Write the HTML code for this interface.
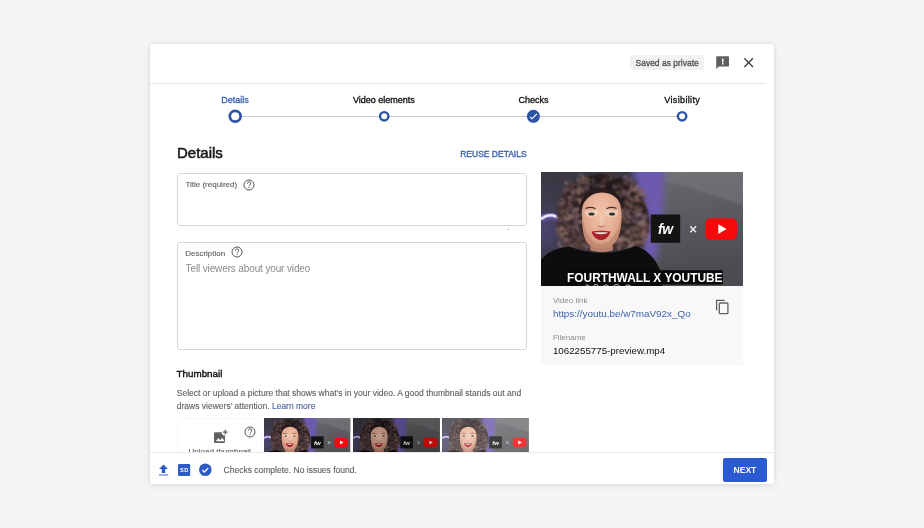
<!DOCTYPE html>
<html><head><meta charset="utf-8">
<style>
*{box-sizing:border-box;margin:0;padding:0}
html,body{width:924px;height:528px;overflow:hidden;background:#f5f5f5;font-family:"Liberation Sans",sans-serif;color:#0f0f0f}
.a{position:absolute;white-space:nowrap;line-height:1}
#dlg{position:absolute;left:150px;top:44px;width:624px;height:440px;background:#fff;border-radius:3px;box-shadow:0 0 4px rgba(0,0,0,.10),0 2px 10px rgba(0,0,0,.07);overflow:hidden}
.hl{position:absolute;height:1px;background:#e6e6e6}
.box{position:absolute;border:1px solid #d6d6d6;border-radius:3px}
.gray{color:#606060;-webkit-text-stroke:0.12px #606060}
.med{-webkit-text-stroke:0.32px currentColor}
.blue{color:#3d63b0}
</style></head><body>
<div id="root" style="position:absolute;left:0;top:0;width:924px;height:528px;will-change:transform">
<div id="dlg"></div>

<!-- header -->
<div class="a" style="left:630px;top:54.5px;width:74px;height:15px;background:#f2f2f2;border-radius:3px"></div>
<div class="a gray med" id="saved" style="left:635.5px;top:58.6px;font-size:8.5px;color:#555">Saved as private</div>
<svg class="a" style="left:714px;top:54px" width="17" height="17" viewBox="714 54 17 17">
  <path d="M717 56.2h11.2a0.8 0.8 0 0 1 .8.8v8.7a0.8 0.8 0 0 1-.8.8h-9.2l-2.8 2.6v-12.1a0.8 0.8 0 0 1 .8-.8z" fill="#5f5f5f"/>
  <rect x="722" y="58.5" width="1.5" height="4" fill="#fff"/>
  <rect x="722" y="63" width="1.5" height="1.5" fill="#fff"/>
</svg>
<svg class="a" style="left:743px;top:57.3px" width="11" height="11" viewBox="0 0 11 11">
  <path d="M1.3 1.2L10 9.9M10 1.2L1.3 9.9" stroke="#444" stroke-width="1.4"/>
</svg>
<div class="hl" style="left:150px;top:83px;width:616px"></div>

<!-- stepper -->
<div class="a blue med" style="left:221.3px;top:95.6px;font-size:9px">Details</div>
<div class="a med" style="left:352.9px;top:95.6px;font-size:9px">Video elements</div>
<div class="a med" style="left:518.6px;top:95.6px;font-size:9px">Checks</div>
<div class="a med" style="left:664.3px;top:95.6px;font-size:9px;letter-spacing:0.35px">Visibility</div>
<div class="a" style="left:235px;top:115.5px;width:447px;height:1.2px;background:#c9c9c9"></div>
<svg class="a" style="left:220px;top:101px" width="478" height="30" viewBox="220 101 478 30">
  <circle cx="235.2" cy="116.3" r="5.4" fill="#fff" stroke="#2c53a6" stroke-width="2.7"/>
  <circle cx="384.2" cy="116.3" r="4.2" fill="#fff" stroke="#2c53a6" stroke-width="2.4"/>
  <circle cx="533.4" cy="116.3" r="6.5" fill="#2c53a6"/>
  <path d="M530.2 117l1.8 1.8 4.8-4.8" fill="none" stroke="#fff" stroke-width="1.15"/>
  <circle cx="682.1" cy="116.3" r="4.2" fill="#fff" stroke="#2c53a6" stroke-width="2.4"/>
</svg>

<!-- heading -->
<div class="a" style="left:177px;top:144.7px;font-size:15px;color:#1a1a1a;-webkit-text-stroke:0.55px #1a1a1a">Details</div>
<div class="a blue" style="left:460.2px;top:149.6px;font-size:8.5px;-webkit-text-stroke:0.35px #3d63b0">REUSE DETAILS</div>

<!-- title box -->
<div class="box" style="left:176.5px;top:173px;width:350.5px;height:53px"></div>
<div class="a gray" style="left:185.4px;top:180.5px;font-size:8px">Title (required)</div>
<svg class="a" style="left:243px;top:178.5px" width="12" height="12" viewBox="0 0 12 12">
  <circle cx="6" cy="6" r="5" fill="none" stroke="#555" stroke-width="1"/>
  <path d="M4.3 4.6a1.7 1.7 0 1 1 2.4 1.5c-.5.3-.7.6-.7 1.2" fill="none" stroke="#555" stroke-width="1"/>
  <circle cx="6" cy="8.6" r=".6" fill="#555"/>
</svg>
<div class="a" style="left:508px;top:229px;width:1px;height:1px;background:#888"></div>

<!-- description box -->
<div class="box" style="left:176.5px;top:242px;width:350.5px;height:107.5px"></div>
<div class="a gray" style="left:185.2px;top:250.1px;font-size:8px">Description</div>
<svg class="a" style="left:231px;top:246.3px" width="12" height="12" viewBox="0 0 12 12">
  <circle cx="6" cy="6" r="5" fill="none" stroke="#555" stroke-width="1"/>
  <path d="M4.3 4.6a1.7 1.7 0 1 1 2.4 1.5c-.5.3-.7.6-.7 1.2" fill="none" stroke="#555" stroke-width="1"/>
  <circle cx="6" cy="8.6" r=".6" fill="#555"/>
</svg>
<div class="a" style="left:185.6px;top:263.9px;font-size:10px;color:#8a8a8a;letter-spacing:-0.13px">Tell viewers about your video</div>

<!-- thumbnail section -->
<div class="a" style="left:176.6px;top:368.6px;font-size:9.8px;color:#111;-webkit-text-stroke:0.4px #111">Thumbnail</div>
<div class="a gray" style="left:176.8px;top:388.8px;font-size:8.5px">Select or upload a picture that shows what’s in your video. A good thumbnail stands out and</div>
<div class="a gray" style="left:176.8px;top:401.8px;font-size:8.5px">draws viewers’ attention. <span class="blue">Learn more</span></div>

<!-- preview -->
<div class="a" style="left:541px;top:286px;width:202px;height:79px;background:#f8f8f8"></div>
<div class="a" style="left:552.9px;top:296.7px;font-size:8px;color:#8c8c8c">Video link</div>
<div class="a blue" style="left:552.9px;top:308.8px;font-size:9.9px">https://youtu.be/w7maV92x_Qo</div>
<div class="a" style="left:552.9px;top:334.2px;font-size:8px;color:#8c8c8c">Filename</div>
<div class="a" style="left:552.9px;top:346px;font-size:9.75px;color:#111">1062255775-preview.mp4</div>
<svg class="a" style="left:714px;top:298px" width="16" height="17" viewBox="0 0 16 17">
  <path d="M2.6 12.3V2.3h8.2" fill="none" stroke="#606060" stroke-width="1.3"/>
  <rect x="5.3" y="5" width="8.6" height="10.6" rx="0.9" fill="none" stroke="#606060" stroke-width="1.3"/>
</svg>

<!-- video -->
<svg width="0" height="0" style="position:absolute"><symbol id="scene" viewBox="0 0 202 114"><defs>
 <linearGradient id="bgR" x1="0" y1="0" x2="0.25" y2="1">
  <stop offset="0" stop-color="#6e6e72"/><stop offset="0.45" stop-color="#5e5e62"/><stop offset="1" stop-color="#4c4c50"/>
 </linearGradient>
 <radialGradient id="glowL" cx="0.05" cy="0.5" r="0.6">
  <stop offset="0" stop-color="#4c4470"/><stop offset="0.45" stop-color="#3c3a48"/><stop offset="1" stop-color="#393942"/>
 </radialGradient>
 <radialGradient id="skin" cx="0.5" cy="0.38" r="0.68">
  <stop offset="0" stop-color="#f0c4aa"/><stop offset="0.55" stop-color="#e6ae94"/><stop offset="1" stop-color="#c89078"/>
 </radialGradient>
 <radialGradient id="hairBase" cx="0.55" cy="0.2" r="0.8">
  <stop offset="0" stop-color="#1e1716"/><stop offset="0.5" stop-color="#2e2222"/><stop offset="1" stop-color="#3e2e2e"/>
 </radialGradient>
 <filter id="blur3" x="-50%" y="-50%" width="200%" height="200%"><feGaussianBlur stdDeviation="3.5"/></filter>
 <filter id="blur1" x="-20%" y="-20%" width="140%" height="140%"><feGaussianBlur stdDeviation="0.8"/></filter>
 <filter id="soft" x="-10%" y="-10%" width="120%" height="120%"><feGaussianBlur stdDeviation="0.85"/></filter>
 <filter id="soft2" x="-10%" y="-10%" width="120%" height="120%"><feGaussianBlur stdDeviation="0.6"/></filter>
 <clipPath id="vclip"><rect width="202" height="114"/></clipPath>
</defs>
<g clip-path="url(#vclip)">
 <rect width="202" height="114" fill="url(#bgR)"/>
 <path d="M110 -2H204V34C184 28 150 14 110 6Z" fill="#7a7a7e" opacity="0.5" filter="url(#blur1)"/>
 <path d="M-2 -2H100V116H-2Z" fill="url(#glowL)" filter="url(#blur1)"/>
 <path d="M90 -10L124 -10L122 40L116 88L102 90L98 30Z" fill="#6c5aae" filter="url(#blur3)"/>
 <path d="M0 47C6 42 13 41.5 21 48.5" fill="none" stroke="#7a64d0" stroke-width="8" opacity="0.55" filter="url(#blur1)"/>
 <path d="M0 47C6 42 13 41.5 21 48.5" fill="none" stroke="#c8b8f8" stroke-width="3.6" opacity="0.7"/>
 <path d="M0 47C6 42 13 41.5 21 48.5" fill="none" stroke="#f0ecff" stroke-width="2"/>
 <g filter="url(#soft)">
 <path d="M60 2.5C74 2 86 6 94 15C101 23 106 34 108.5 45C110 57 107 67 102 74C97 79 90 80 84 78L40 78C33 80 27 78 23 72C18 64 15.5 54 16 44C17 32 21 21 28 13C36 5 48 3 60 2.5Z" fill="url(#hairBase)"/>
 <g fill="none" style="opacity:var(--curl,1)">
 <path d="M30.7 55.0A2.3 2.3 0 1 1 26.4 54.3" stroke="#4e3a3a" stroke-width="1.5"/>
<path d="M57.5 11.5A2.7 2.7 0 1 1 53.5 9.3" stroke="#6a5868" stroke-width="1.0"/>
<path d="M99.0 48.0A1.4 1.4 0 1 1 98.9 50.5" stroke="#82625c" stroke-width="1.3"/>
<path d="M83.7 6.3A2.5 2.5 0 1 1 88.3 8.2" stroke="#5e4442" stroke-width="1.3"/>
<path d="M99.4 16.5A2.5 2.5 0 1 1 96.3 19.7" stroke="#70524e" stroke-width="1.4"/>
<path d="M25.9 44.4A1.7 1.7 0 1 1 28.0 41.8" stroke="#4e3a3a" stroke-width="1.3"/>
<path d="M37.0 66.8A1.5 1.5 0 1 1 39.9 67.4" stroke="#6a5868" stroke-width="1.6"/>
<path d="M33.2 46.8A2.1 2.1 0 1 1 33.6 50.8" stroke="#8a6e74" stroke-width="1.1"/>
<path d="M96.6 28.7A2.4 2.4 0 1 1 97.4 25.2" stroke="#82625c" stroke-width="1.1"/>
<path d="M30.6 33.4A1.5 1.5 0 1 1 28.5 33.1" stroke="#5e4442" stroke-width="1.4"/>
<path d="M100.4 41.1A1.9 1.9 0 1 1 101.4 37.8" stroke="#70524e" stroke-width="1.6"/>
<path d="M41.9 70.3A2.3 2.3 0 0 1 38.9 67.0" stroke="#5e4442" stroke-width="1.3"/>
<path d="M48.5 72.8A2.8 2.8 0 0 1 43.0 72.0" stroke="#6a5868" stroke-width="1.4"/>
<path d="M75.7 74.4A2.0 2.0 0 0 1 77.9 71.1" stroke="#70524e" stroke-width="1.5"/>
<path d="M27.8 57.9A1.9 1.9 0 1 1 24.7 56.2" stroke="#70524e" stroke-width="1.6"/>
<path d="M76.4 66.0A2.2 2.2 0 1 1 74.3 68.9" stroke="#82625c" stroke-width="1.4"/>
<path d="M24.1 12.0A1.9 1.9 0 0 1 27.4 10.2" stroke="#70524e" stroke-width="1.0"/>
<path d="M97.6 53.3A1.5 1.5 0 1 1 99.8 53.4" stroke="#8a6e74" stroke-width="1.6"/>
<path d="M75.7 15.0A1.6 1.6 0 1 1 73.7 13.0" stroke="#6a5868" stroke-width="1.3"/>
<path d="M101.0 60.1A2.5 2.5 0 1 1 97.3 63.3" stroke="#5e4442" stroke-width="1.2"/>
<path d="M33.6 78.5A2.2 2.2 0 1 1 37.1 75.8" stroke="#6a5868" stroke-width="1.0"/>
<path d="M100.2 22.7A2.1 2.1 0 1 1 103.1 25.4" stroke="#8a6e74" stroke-width="1.3"/>
<path d="M17.4 45.9A1.8 1.8 0 1 1 17.6 49.3" stroke="#8a6e74" stroke-width="1.2"/>
<path d="M66.6 2.8A2.8 2.8 0 1 1 68.8 7.8" stroke="#82625c" stroke-width="1.0"/>
<path d="M96.7 52.9A2.2 2.2 0 1 1 100.8 53.1" stroke="#94766a" stroke-width="1.5"/>
<path d="M80.5 66.8A2.4 2.4 0 1 1 84.5 64.2" stroke="#4e3a3a" stroke-width="1.5"/>
<path d="M32.5 73.3A2.3 2.3 0 1 1 36.1 75.0" stroke="#5e4442" stroke-width="1.3"/>
<path d="M100.8 60.1A2.2 2.2 0 1 1 99.7 64.2" stroke="#94766a" stroke-width="1.4"/>
<path d="M92.5 19.6A2.0 2.0 0 1 1 93.2 22.8" stroke="#4e3a3a" stroke-width="1.2"/>
<path d="M41.7 31.1A1.5 1.5 0 1 1 44.1 32.5" stroke="#8a6e74" stroke-width="1.1"/>
<path d="M27.7 32.6A2.3 2.3 0 0 1 29.7 36.7" stroke="#82625c" stroke-width="1.4"/>
<path d="M37.5 69.2A1.5 1.5 0 1 1 38.6 66.6" stroke="#6a5868" stroke-width="1.3"/>
<path d="M82.2 11.3A1.9 1.9 0 1 1 85.0 13.8" stroke="#4e3a3a" stroke-width="1.3"/>
<path d="M29.8 32.4A1.7 1.7 0 1 1 29.3 29.1" stroke="#70524e" stroke-width="1.6"/>
<path d="M76.7 70.2A1.9 1.9 0 1 1 74.0 68.2" stroke="#5e4442" stroke-width="1.3"/>
<path d="M83.3 19.0A1.3 1.3 0 0 1 80.8 19.7" stroke="#8a6e74" stroke-width="1.1"/>
<path d="M31.2 46.5A2.7 2.7 0 0 1 26.0 45.4" stroke="#4e3a3a" stroke-width="1.3"/>
<path d="M37.1 64.5A2.6 2.6 0 1 1 32.7 62.3" stroke="#4e3a3a" stroke-width="1.5"/>
<path d="M21.4 74.0A2.4 2.4 0 1 1 19.8 69.6" stroke="#94766a" stroke-width="1.4"/>
<path d="M93.0 28.9A1.8 1.8 0 1 1 96.0 30.2" stroke="#70524e" stroke-width="1.0"/>
<path d="M106.9 42.5A1.9 1.9 0 1 1 103.2 43.0" stroke="#6a5868" stroke-width="1.1"/>
<path d="M42.4 17.1A2.1 2.1 0 1 1 45.6 19.3" stroke="#6a5868" stroke-width="1.2"/>
<path d="M27.5 57.5A2.0 2.0 0 0 1 30.6 55.1" stroke="#70524e" stroke-width="1.5"/>
<path d="M37.7 4.0A2.3 2.3 0 1 1 39.8 6.8" stroke="#6a5868" stroke-width="1.5"/>
<path d="M78.8 12.9A2.1 2.1 0 1 1 75.0 11.7" stroke="#4e3a3a" stroke-width="1.1"/>
<path d="M89.7 61.8A2.6 2.6 0 1 1 91.2 57.1" stroke="#82625c" stroke-width="1.5"/>
<path d="M98.7 43.0A2.8 2.8 0 1 1 95.9 45.6" stroke="#4e3a3a" stroke-width="1.6"/>
<path d="M87.3 58.3A1.6 1.6 0 1 1 84.4 59.5" stroke="#8a6e74" stroke-width="1.3"/>
<path d="M22.3 19.3A1.9 1.9 0 0 1 26.2 18.7" stroke="#6a5868" stroke-width="1.3"/>
<path d="M33.0 17.3A2.5 2.5 0 1 1 34.8 12.8" stroke="#70524e" stroke-width="1.3"/>
<path d="M94.8 49.4A2.5 2.5 0 0 1 93.1 44.7" stroke="#6a5868" stroke-width="1.1"/>
<path d="M90.3 71.0A1.7 1.7 0 0 1 89.0 67.8" stroke="#94766a" stroke-width="1.6"/>
<path d="M87.2 64.0A2.0 2.0 0 0 1 84.1 66.5" stroke="#5e4442" stroke-width="1.0"/>
<path d="M83.9 7.3A1.7 1.7 0 1 1 85.4 5.0" stroke="#5e4442" stroke-width="1.2"/>
<path d="M92.2 72.9A1.6 1.6 0 1 1 89.7 74.1" stroke="#94766a" stroke-width="1.2"/>
<path d="M35.1 8.8A2.4 2.4 0 1 1 36.9 12.8" stroke="#82625c" stroke-width="1.1"/>
<path d="M62.4 12.5A2.0 2.0 0 1 1 65.4 10.3" stroke="#5e4442" stroke-width="1.4"/>
<path d="M16.2 54.6A1.9 1.9 0 1 1 18.5 57.5" stroke="#5e4442" stroke-width="1.5"/>
<path d="M81.1 37.4A2.1 2.1 0 1 1 82.2 41.1" stroke="#8a6e74" stroke-width="1.2"/>
<path d="M85.7 51.6A2.0 2.0 0 0 1 89.2 49.9" stroke="#8a6e74" stroke-width="1.4"/>
<path d="M95.0 70.5A2.6 2.6 0 0 1 99.8 72.0" stroke="#94766a" stroke-width="1.4"/>
<path d="M62.8 12.8A1.8 1.8 0 1 1 59.3 12.9" stroke="#82625c" stroke-width="1.2"/>
<path d="M29.4 13.7A2.1 2.1 0 1 1 26.7 10.4" stroke="#70524e" stroke-width="1.3"/>
<path d="M88.5 13.9A2.3 2.3 0 0 1 88.0 18.6" stroke="#8a6e74" stroke-width="1.0"/>
<path d="M103.8 58.2A2.5 2.5 0 1 1 107.2 56.7" stroke="#4e3a3a" stroke-width="1.2"/>
<path d="M99.8 60.0A2.2 2.2 0 1 1 100.2 63.6" stroke="#70524e" stroke-width="1.0"/>
<path d="M36.8 39.2A1.7 1.7 0 1 1 39.4 37.5" stroke="#94766a" stroke-width="1.1"/>
<path d="M40.4 5.5A1.8 1.8 0 1 1 40.9 9.0" stroke="#94766a" stroke-width="1.1"/>
<path d="M78.5 73.2A1.4 1.4 0 1 1 80.9 73.2" stroke="#6a5868" stroke-width="1.5"/>
<path d="M32.1 37.8A1.8 1.8 0 0 1 32.6 41.1" stroke="#82625c" stroke-width="1.3"/>
<path d="M27.8 76.0A1.3 1.3 0 1 1 28.8 78.4" stroke="#94766a" stroke-width="1.1"/>
<path d="M87.1 41.2A1.9 1.9 0 0 1 84.4 43.7" stroke="#82625c" stroke-width="1.4"/>
<path d="M101.5 50.6A1.7 1.7 0 1 1 100.7 52.9" stroke="#94766a" stroke-width="1.5"/>
<path d="M101.1 17.2A2.8 2.8 0 1 1 97.1 19.6" stroke="#82625c" stroke-width="1.3"/>
<path d="M89.3 17.1A1.5 1.5 0 1 1 87.4 17.7" stroke="#5e4442" stroke-width="1.5"/>
<path d="M78.1 22.1A1.5 1.5 0 1 1 77.3 24.6" stroke="#4e3a3a" stroke-width="1.0"/>
<path d="M27.7 47.8A2.3 2.3 0 1 1 31.8 46.0" stroke="#94766a" stroke-width="1.4"/>
<path d="M85.3 7.5A1.8 1.8 0 1 1 83.0 9.1" stroke="#6a5868" stroke-width="1.2"/>
<path d="M101.8 20.5A1.8 1.8 0 1 1 98.4 21.6" stroke="#8a6e74" stroke-width="1.2"/>
<path d="M40.2 61.4A1.3 1.3 0 1 1 38.7 63.2" stroke="#82625c" stroke-width="1.0"/>
<path d="M35.3 8.5A1.8 1.8 0 0 1 35.8 11.9" stroke="#6a5868" stroke-width="1.1"/>
<path d="M103.6 25.8A1.7 1.7 0 1 1 106.4 25.4" stroke="#70524e" stroke-width="1.4"/>
<path d="M41.2 75.5A1.4 1.4 0 1 1 42.5 73.2" stroke="#82625c" stroke-width="1.2"/>
<path d="M22.8 76.1A2.7 2.7 0 0 1 18.2 78.8" stroke="#4e3a3a" stroke-width="1.4"/>
<path d="M85.1 35.8A1.4 1.4 0 1 1 83.9 33.7" stroke="#4e3a3a" stroke-width="1.5"/>
<path d="M28.8 42.4A1.5 1.5 0 1 1 27.2 43.7" stroke="#94766a" stroke-width="1.0"/>
<path d="M97.7 65.0A2.0 2.0 0 1 1 100.4 62.7" stroke="#82625c" stroke-width="1.1"/>
<path d="M36.1 28.1A2.1 2.1 0 1 1 38.3 30.3" stroke="#5e4442" stroke-width="1.2"/>
<path d="M77.2 69.4A2.0 2.0 0 1 1 74.2 71.4" stroke="#4e3a3a" stroke-width="1.2"/>
<path d="M78.6 26.3A2.2 2.2 0 0 1 82.4 23.9" stroke="#6a5868" stroke-width="1.3"/>
<path d="M100.2 69.3A1.6 1.6 0 1 1 101.7 71.2" stroke="#70524e" stroke-width="1.6"/>
<path d="M20.1 56.9A1.7 1.7 0 0 1 22.9 58.8" stroke="#94766a" stroke-width="1.3"/>
<path d="M93.7 75.3A2.6 2.6 0 1 1 93.7 70.4" stroke="#8a6e74" stroke-width="1.6"/>
<path d="M81.8 43.0A2.1 2.1 0 1 1 82.2 38.8" stroke="#94766a" stroke-width="1.5"/>
<path d="M41.1 31.7A1.6 1.6 0 1 1 42.6 29.4" stroke="#6a5868" stroke-width="1.4"/>
<path d="M80.1 32.4A1.7 1.7 0 1 1 77.0 30.9" stroke="#6a5868" stroke-width="1.5"/>
<path d="M28.4 25.6A2.5 2.5 0 1 1 32.6 28.2" stroke="#70524e" stroke-width="1.1"/>
<path d="M94.1 47.0A1.6 1.6 0 1 1 96.2 45.3" stroke="#4e3a3a" stroke-width="1.2"/>
<path d="M107.8 29.9A2.2 2.2 0 1 1 103.4 30.6" stroke="#70524e" stroke-width="1.2"/>
<path d="M30.5 7.3A1.8 1.8 0 1 1 29.2 10.7" stroke="#5e4442" stroke-width="1.6"/>
<path d="M41.9 64.5A2.7 2.7 0 1 1 36.9 63.9" stroke="#5e4442" stroke-width="1.5"/>
<path d="M35.1 29.2A2.0 2.0 0 1 1 39.1 28.7" stroke="#82625c" stroke-width="1.5"/>
<path d="M41.6 49.9A1.4 1.4 0 1 1 40.2 48.1" stroke="#70524e" stroke-width="1.4"/>
<path d="M80.9 20.5A2.0 2.0 0 0 1 84.7 21.7" stroke="#82625c" stroke-width="1.3"/>
<path d="M101.6 67.8A2.5 2.5 0 1 1 98.6 70.8" stroke="#82625c" stroke-width="1.2"/>
<path d="M42.8 36.9A2.7 2.7 0 0 1 37.6 35.5" stroke="#5e4442" stroke-width="1.6"/>
<path d="M43.8 69.4A1.9 1.9 0 1 1 45.8 66.8" stroke="#4e3a3a" stroke-width="1.1"/>
<path d="M23.7 45.3A2.7 2.7 0 1 1 28.6 43.8" stroke="#70524e" stroke-width="1.2"/>
<path d="M20.5 42.9A2.7 2.7 0 1 1 24.2 43.5" stroke="#5e4442" stroke-width="1.5"/>
<path d="M38.8 17.8A1.6 1.6 0 1 1 40.7 15.4" stroke="#6a5868" stroke-width="1.1"/>
<path d="M82.9 16.6A1.5 1.5 0 1 1 81.2 14.4" stroke="#4e3a3a" stroke-width="1.2"/>
<path d="M104.9 52.6A2.6 2.6 0 1 1 102.7 57.1" stroke="#70524e" stroke-width="1.6"/>
<path d="M85.0 21.9A1.3 1.3 0 1 1 86.5 23.1" stroke="#70524e" stroke-width="1.0"/>
<path d="M49.0 74.7A2.0 2.0 0 0 1 52.5 76.6" stroke="#94766a" stroke-width="1.5"/>
<path d="M76.6 3.6A1.8 1.8 0 1 1 74.2 2.4" stroke="#6a5868" stroke-width="1.0"/>
<path d="M19.0 36.5A2.3 2.3 0 1 1 22.3 33.5" stroke="#5e4442" stroke-width="1.5"/>
<path d="M89.3 21.8A2.0 2.0 0 1 1 92.2 19.2" stroke="#6a5868" stroke-width="1.4"/>
<path d="M92.9 58.5A2.3 2.3 0 1 1 91.9 54.4" stroke="#4e3a3a" stroke-width="1.6"/>
<path d="M32.9 75.4A2.3 2.3 0 1 1 36.5 72.9" stroke="#70524e" stroke-width="1.1"/>
<path d="M75.0 24.1A2.3 2.3 0 0 1 78.2 20.8" stroke="#82625c" stroke-width="1.2"/>
<path d="M96.5 15.2A2.6 2.6 0 1 1 93.4 12.2" stroke="#82625c" stroke-width="1.5"/>
<path d="M35.3 19.0A2.1 2.1 0 1 1 37.7 22.5" stroke="#94766a" stroke-width="1.2"/>
<path d="M93.3 14.4A2.3 2.3 0 1 1 93.9 11.3" stroke="#4e3a3a" stroke-width="1.5"/>
<path d="M32.0 42.8A2.8 2.8 0 1 1 35.2 45.2" stroke="#8a6e74" stroke-width="1.0"/>
<path d="M38.0 76.5A1.7 1.7 0 1 1 40.3 75.0" stroke="#5e4442" stroke-width="1.2"/>
<path d="M31.5 28.1A2.0 2.0 0 1 1 31.6 24.6" stroke="#6a5868" stroke-width="1.2"/>
<path d="M94.3 59.5A2.0 2.0 0 1 1 92.7 55.8" stroke="#8a6e74" stroke-width="1.0"/>
<path d="M29.2 35.6A2.1 2.1 0 1 1 25.1 34.8" stroke="#82625c" stroke-width="1.3"/>
<path d="M91.4 41.1A2.5 2.5 0 1 1 96.2 42.5" stroke="#82625c" stroke-width="1.2"/>
<path d="M75.8 12.0A1.9 1.9 0 0 1 76.0 15.7" stroke="#4e3a3a" stroke-width="1.1"/>
<path d="M82.5 6.5A1.6 1.6 0 1 1 84.6 7.3" stroke="#6a5868" stroke-width="1.4"/>
<path d="M81.5 13.5A1.6 1.6 0 1 1 80.6 11.2" stroke="#4e3a3a" stroke-width="1.0"/>
<path d="M23.8 52.7A2.7 2.7 0 0 1 27.9 55.7" stroke="#70524e" stroke-width="1.1"/>
<path d="M16.9 61.0A2.4 2.4 0 1 1 20.0 57.8" stroke="#70524e" stroke-width="1.5"/>
<path d="M92.2 8.3A1.6 1.6 0 1 1 90.1 6.2" stroke="#82625c" stroke-width="1.4"/>
<path d="M89.0 45.0A1.9 1.9 0 0 1 87.4 41.7" stroke="#6a5868" stroke-width="1.0"/>
<path d="M80.0 69.1A1.7 1.7 0 1 1 82.7 67.8" stroke="#6a5868" stroke-width="1.5"/>
<path d="M63.6 8.0A1.8 1.8 0 0 1 66.3 5.8" stroke="#4e3a3a" stroke-width="1.2"/>
<path d="M100.1 56.0A1.5 1.5 0 0 1 102.6 54.5" stroke="#82625c" stroke-width="1.2"/>
<path d="M45.7 16.5A1.5 1.5 0 0 1 48.2 15.0" stroke="#6a5868" stroke-width="1.4"/>
<path d="M40.9 31.5A1.7 1.7 0 0 1 40.0 28.2" stroke="#94766a" stroke-width="1.5"/>
<path d="M30.3 20.2A2.6 2.6 0 1 1 28.9 25.0" stroke="#70524e" stroke-width="1.3"/>
<path d="M38.2 44.6A1.6 1.6 0 0 1 40.9 43.0" stroke="#8a6e74" stroke-width="1.2"/>
<path d="M72.5 69.7A2.6 2.6 0 1 1 77.4 68.4" stroke="#5e4442" stroke-width="1.6"/>
<path d="M43.4 10.4A1.6 1.6 0 0 1 40.7 8.7" stroke="#6a5868" stroke-width="1.4"/>
<path d="M89.4 43.3A1.8 1.8 0 0 1 86.5 45.4" stroke="#8a6e74" stroke-width="1.4"/>
<path d="M33.2 60.8A2.2 2.2 0 1 1 32.2 64.7" stroke="#4e3a3a" stroke-width="1.0"/>
<path d="M100.4 36.3A2.7 2.7 0 1 1 97.4 33.8" stroke="#70524e" stroke-width="1.3"/>
<path d="M94.6 14.3A2.5 2.5 0 1 1 90.6 14.2" stroke="#82625c" stroke-width="1.1"/>
<path d="M24.6 78.3A1.9 1.9 0 1 1 27.8 76.8" stroke="#6a5868" stroke-width="1.1"/>
<path d="M103.5 58.8A1.5 1.5 0 1 1 101.7 61.0" stroke="#70524e" stroke-width="1.2"/>
<path d="M32.1 40.2A2.7 2.7 0 0 1 37.4 38.9" stroke="#8a6e74" stroke-width="1.4"/>
<path d="M89.1 14.2A2.4 2.4 0 1 1 90.7 17.0" stroke="#82625c" stroke-width="1.2"/>
<path d="M24.4 21.3A2.6 2.6 0 1 1 29.1 19.3" stroke="#82625c" stroke-width="1.2"/>
<path d="M78.9 70.4A1.9 1.9 0 0 1 82.7 70.3" stroke="#82625c" stroke-width="1.1"/>
<path d="M41.0 16.4A1.4 1.4 0 0 1 40.6 19.1" stroke="#5e4442" stroke-width="1.0"/>
<path d="M75.3 77.3A2.7 2.7 0 1 1 80.1 75.1" stroke="#4e3a3a" stroke-width="1.5"/>
<path d="M100.6 47.7A2.2 2.2 0 1 1 97.3 50.0" stroke="#8a6e74" stroke-width="1.6"/>
<path d="M99.3 27.7A2.3 2.3 0 1 1 97.4 23.7" stroke="#94766a" stroke-width="1.5"/>
<path d="M32.5 43.6A2.8 2.8 0 1 1 35.6 46.2" stroke="#5e4442" stroke-width="1.1"/>
<path d="M21.0 46.7A1.4 1.4 0 1 1 19.7 48.6" stroke="#4e3a3a" stroke-width="1.0"/>
<path d="M24.4 47.0A1.5 1.5 0 1 1 22.6 49.4" stroke="#5e4442" stroke-width="1.4"/>
<path d="M87.0 36.1A1.7 1.7 0 1 1 86.0 39.2" stroke="#5e4442" stroke-width="1.0"/>
<path d="M100.8 47.0A2.0 2.0 0 1 1 101.7 50.5" stroke="#70524e" stroke-width="1.4"/>
<path d="M91.3 67.4A2.5 2.5 0 1 1 95.2 65.9" stroke="#82625c" stroke-width="1.4"/>
<path d="M101.9 58.9A1.6 1.6 0 1 1 100.4 61.7" stroke="#82625c" stroke-width="1.3"/>
<path d="M23.6 43.6A1.4 1.4 0 1 1 25.4 41.4" stroke="#4e3a3a" stroke-width="1.5"/>
<path d="M22.9 67.9A1.4 1.4 0 1 1 23.0 65.3" stroke="#70524e" stroke-width="1.0"/>
<path d="M48.6 11.4A2.3 2.3 0 1 1 48.6 7.3" stroke="#94766a" stroke-width="1.2"/>
<path d="M15.7 33.1A2.7 2.7 0 0 1 20.4 30.9" stroke="#5e4442" stroke-width="1.4"/>
<path d="M77.3 71.9A1.5 1.5 0 1 1 76.7 74.8" stroke="#5e4442" stroke-width="1.2"/>
<path d="M32.5 57.7A2.8 2.8 0 1 1 37.1 57.3" stroke="#70524e" stroke-width="1.1"/>
<path d="M16.6 39.8A1.3 1.3 0 1 1 17.7 41.5" stroke="#4e3a3a" stroke-width="1.2"/>
<path d="M27.5 33.2A2.4 2.4 0 1 1 25.1 35.9" stroke="#4e3a3a" stroke-width="1.5"/>
<path d="M101.5 49.6A1.5 1.5 0 1 1 103.2 52.0" stroke="#8a6e74" stroke-width="1.6"/>
<path d="M94.1 16.4A1.4 1.4 0 1 1 93.2 18.8" stroke="#8a6e74" stroke-width="1.2"/>
<path d="M100.4 55.4A2.5 2.5 0 0 1 96.5 58.1" stroke="#4e3a3a" stroke-width="1.6"/>
<path d="M28.1 75.7A2.7 2.7 0 1 1 22.7 76.9" stroke="#70524e" stroke-width="1.6"/>
<path d="M25.5 47.0A1.8 1.8 0 1 1 22.0 47.9" stroke="#6a5868" stroke-width="1.1"/>
<path d="M31.8 58.6A2.4 2.4 0 1 1 35.8 58.8" stroke="#70524e" stroke-width="1.1"/>
<path d="M90.1 34.5A1.9 1.9 0 0 1 93.2 36.6" stroke="#70524e" stroke-width="1.3"/>
<path d="M102.5 65.8A2.8 2.8 0 0 1 107.3 63.3" stroke="#8a6e74" stroke-width="1.3"/>
<path d="M30.2 24.1A1.4 1.4 0 0 1 32.0 26.3" stroke="#4e3a3a" stroke-width="1.5"/>
<path d="M91.9 71.9A1.6 1.6 0 1 1 89.7 69.7" stroke="#6a5868" stroke-width="1.4"/>
<path d="M33.2 61.4A1.5 1.5 0 0 1 31.6 64.1" stroke="#6a5868" stroke-width="1.1"/>
<path d="M40.8 47.8A1.7 1.7 0 1 1 37.7 48.9" stroke="#94766a" stroke-width="1.4"/>
<path d="M22.1 65.6A2.2 2.2 0 1 1 24.7 62.2" stroke="#94766a" stroke-width="1.3"/>
<path d="M75.2 71.0A2.1 2.1 0 1 1 77.0 67.9" stroke="#70524e" stroke-width="1.3"/>
<path d="M104.7 40.8A1.8 1.8 0 1 1 101.7 42.4" stroke="#4e3a3a" stroke-width="1.4"/>
<path d="M92.6 73.7A2.4 2.4 0 0 1 96.9 71.8" stroke="#82625c" stroke-width="1.5"/>
<path d="M105.0 62.0A2.7 2.7 0 1 1 102.7 66.5" stroke="#94766a" stroke-width="1.5"/>
<path d="M39.5 58.9A2.3 2.3 0 0 1 36.7 55.4" stroke="#8a6e74" stroke-width="1.1"/>
<path d="M85.5 65.9A2.5 2.5 0 0 1 81.1 64.1" stroke="#8a6e74" stroke-width="1.2"/>
<path d="M36.8 13.7A1.8 1.8 0 1 1 35.5 17.1" stroke="#82625c" stroke-width="1.2"/>
<path d="M78.3 46.6A2.7 2.7 0 1 1 82.2 49.5" stroke="#82625c" stroke-width="1.5"/>
<path d="M97.2 40.5A2.4 2.4 0 1 1 100.6 38.5" stroke="#70524e" stroke-width="1.1"/>
<path d="M42.5 5.1A2.8 2.8 0 1 1 40.4 8.3" stroke="#82625c" stroke-width="1.2"/>
<path d="M26.9 45.3A1.7 1.7 0 1 1 26.5 42.0" stroke="#4e3a3a" stroke-width="1.1"/>
<path d="M26.0 25.7A1.3 1.3 0 0 1 26.4 23.1" stroke="#4e3a3a" stroke-width="1.4"/>
<path d="M89.8 75.4A2.7 2.7 0 1 1 84.6 76.3" stroke="#8a6e74" stroke-width="1.2"/>
<path d="M20.5 41.4A1.6 1.6 0 0 1 22.8 39.3" stroke="#82625c" stroke-width="1.4"/>
<path d="M27.4 49.0A2.0 2.0 0 1 1 31.2 47.8" stroke="#8a6e74" stroke-width="1.1"/>
<path d="M30.0 30.9A1.5 1.5 0 0 1 29.7 28.0" stroke="#5e4442" stroke-width="1.3"/>
<path d="M85.4 35.2A1.3 1.3 0 1 1 83.2 34.3" stroke="#4e3a3a" stroke-width="1.4"/>
<path d="M44.6 13.9A2.6 2.6 0 1 1 45.8 9.2" stroke="#4e3a3a" stroke-width="1.4"/>
<path d="M37.5 19.6A1.8 1.8 0 1 1 40.4 19.4" stroke="#70524e" stroke-width="1.3"/>
<path d="M83.3 69.1A1.9 1.9 0 1 1 86.9 70.0" stroke="#94766a" stroke-width="1.1"/>
<path d="M19.9 27.4A2.4 2.4 0 1 1 18.5 30.7" stroke="#8a6e74" stroke-width="1.2"/>
<path d="M22.7 23.2A1.4 1.4 0 1 1 22.9 20.5" stroke="#4e3a3a" stroke-width="1.2"/>
<path d="M85.8 25.1A2.5 2.5 0 0 1 87.6 20.4" stroke="#70524e" stroke-width="1.6"/>
<path d="M23.1 75.0A2.6 2.6 0 1 1 27.2 74.1" stroke="#5e4442" stroke-width="1.5"/>
<path d="M83.4 65.4A2.1 2.1 0 1 1 79.5 66.9" stroke="#82625c" stroke-width="1.5"/>
<path d="M99.4 28.1A2.5 2.5 0 1 1 104.0 27.8" stroke="#4e3a3a" stroke-width="1.4"/>
<path d="M35.8 69.5A2.5 2.5 0 0 1 39.8 66.7" stroke="#4e3a3a" stroke-width="1.5"/>
<path d="M80.8 72.0A1.7 1.7 0 0 1 82.4 69.1" stroke="#82625c" stroke-width="1.1"/>
<path d="M28.0 38.1A1.4 1.4 0 1 1 25.2 37.7" stroke="#6a5868" stroke-width="1.3"/>
<path d="M29.0 67.0A1.4 1.4 0 1 1 26.6 66.8" stroke="#82625c" stroke-width="1.4"/>
<path d="M25.8 13.1A2.0 2.0 0 1 1 22.7 14.3" stroke="#5e4442" stroke-width="1.4"/>
<path d="M102.4 19.1A1.4 1.4 0 0 1 100.1 17.9" stroke="#70524e" stroke-width="1.0"/>
<path d="M79.6 35.4A2.7 2.7 0 1 1 83.7 34.7" stroke="#4e3a3a" stroke-width="1.1"/>
<path d="M21.4 65.0A2.1 2.1 0 1 1 20.1 61.1" stroke="#82625c" stroke-width="1.3"/>
<path d="M104.5 44.4A1.4 1.4 0 1 1 102.1 43.6" stroke="#8a6e74" stroke-width="1.2"/>
<path d="M97.6 41.6A1.6 1.6 0 0 1 95.0 43.1" stroke="#8a6e74" stroke-width="1.5"/>
<path d="M18.8 36.7A1.3 1.3 0 1 1 21.4 37.6" stroke="#5e4442" stroke-width="1.5"/>
<path d="M95.5 17.5A2.4 2.4 0 1 1 97.2 22.0" stroke="#94766a" stroke-width="1.0"/>
<path d="M24.1 69.6A1.5 1.5 0 1 1 26.4 69.0" stroke="#8a6e74" stroke-width="1.6"/>
<path d="M99.2 20.3A1.8 1.8 0 1 1 100.6 17.7" stroke="#70524e" stroke-width="1.1"/>
<path d="M27.0 61.3A1.5 1.5 0 0 1 24.4 59.9" stroke="#94766a" stroke-width="1.2"/>
<path d="M84.2 38.4A1.6 1.6 0 0 1 81.8 36.5" stroke="#6a5868" stroke-width="1.5"/>
<path d="M80.2 19.2A1.6 1.6 0 1 1 83.0 18.4" stroke="#4e3a3a" stroke-width="1.1"/>
<path d="M29.4 20.6A2.7 2.7 0 1 1 33.1 22.0" stroke="#4e3a3a" stroke-width="1.4"/>
<path d="M33.0 50.0A2.7 2.7 0 1 1 31.3 54.0" stroke="#6a5868" stroke-width="1.4"/>
<path d="M79.7 77.9A2.0 2.0 0 1 1 79.6 73.9" stroke="#94766a" stroke-width="1.3"/>
<path d="M25.9 42.5A2.3 2.3 0 1 1 23.0 44.0" stroke="#94766a" stroke-width="1.3"/>
<path d="M37.5 22.2A2.8 2.8 0 1 1 42.6 20.7" stroke="#82625c" stroke-width="1.6"/>
<path d="M100.9 27.0A1.6 1.6 0 1 1 99.2 29.3" stroke="#5e4442" stroke-width="1.2"/>
<path d="M106.2 46.8A2.7 2.7 0 0 1 101.5 44.1" stroke="#5e4442" stroke-width="1.3"/>
<path d="M88.4 77.2A2.1 2.1 0 1 1 90.7 73.8" stroke="#94766a" stroke-width="1.3"/>
<path d="M36.2 41.5A2.3 2.3 0 1 1 31.7 42.2" stroke="#8a6e74" stroke-width="1.1"/>
<path d="M70.6 78.5A1.9 1.9 0 1 1 71.4 74.7" stroke="#94766a" stroke-width="1.5"/>
<path d="M104.4 71.3A2.1 2.1 0 1 1 103.7 67.1" stroke="#6a5868" stroke-width="1.5"/>
<path d="M66.7 2.5A2.3 2.3 0 1 1 65.6 5.7" stroke="#4e3a3a" stroke-width="1.4"/>
<path d="M98.8 44.0A2.1 2.1 0 1 1 102.0 46.2" stroke="#6a5868" stroke-width="1.5"/>
<path d="M84.1 73.3A2.4 2.4 0 1 1 82.8 68.8" stroke="#70524e" stroke-width="1.1"/>
<path d="M77.9 69.9A1.8 1.8 0 1 1 79.9 68.0" stroke="#94766a" stroke-width="1.5"/>
<path d="M33.8 18.3A1.6 1.6 0 0 1 33.0 21.4" stroke="#70524e" stroke-width="1.5"/>
<path d="M82.1 72.2A2.3 2.3 0 1 1 84.8 74.0" stroke="#4e3a3a" stroke-width="1.0"/>
<path d="M41.7 26.0A1.7 1.7 0 0 1 42.9 29.2" stroke="#82625c" stroke-width="1.5"/>
<path d="M89.7 36.0A2.7 2.7 0 1 1 85.1 36.0" stroke="#5e4442" stroke-width="1.2"/>
<path d="M86.3 38.2A2.1 2.1 0 1 1 83.0 40.6" stroke="#6a5868" stroke-width="1.5"/>
<path d="M101.5 60.1A2.4 2.4 0 1 1 105.8 59.0" stroke="#5e4442" stroke-width="1.4"/>
<path d="M104.4 68.9A2.0 2.0 0 1 1 107.0 66.0" stroke="#6a5868" stroke-width="1.3"/>
<path d="M42.4 77.5A1.8 1.8 0 1 1 45.5 78.9" stroke="#5e4442" stroke-width="1.3"/>
<path d="M89.6 30.9A2.3 2.3 0 1 1 86.6 27.9" stroke="#82625c" stroke-width="1.5"/>
<path d="M43.8 73.3A1.8 1.8 0 0 1 46.1 70.7" stroke="#70524e" stroke-width="1.4"/>
<path d="M97.4 54.7A1.9 1.9 0 1 1 93.9 54.4" stroke="#94766a" stroke-width="1.2"/>
<path d="M94.2 9.0A2.5 2.5 0 1 1 90.2 11.4" stroke="#4e3a3a" stroke-width="1.4"/>
<path d="M19.7 53.8A2.4 2.4 0 1 1 16.5 57.0" stroke="#94766a" stroke-width="1.4"/>
<path d="M84.2 56.2A1.3 1.3 0 1 1 82.6 54.5" stroke="#70524e" stroke-width="1.3"/>
<path d="M85.9 28.7A2.2 2.2 0 1 1 88.0 31.5" stroke="#5e4442" stroke-width="1.0"/>
<path d="M31.0 45.6A1.7 1.7 0 1 1 29.3 42.9" stroke="#70524e" stroke-width="1.1"/>
<path d="M99.6 73.0A1.8 1.8 0 1 1 102.0 75.8" stroke="#4e3a3a" stroke-width="1.4"/>
<path d="M93.2 43.6A1.8 1.8 0 1 1 95.2 46.2" stroke="#6a5868" stroke-width="1.6"/>
<path d="M67.9 75.5A1.2 1.2 0 0 1 69.8 75.2" stroke="#b8a0a0" stroke-width="0.8"/>
<path d="M90.9 28.3A1.3 1.3 0 0 1 91.2 30.0" stroke="#b8a0a0" stroke-width="0.8"/>
<path d="M31.2 74.3A1.7 1.7 0 0 1 29.0 73.0" stroke="#b8a0a0" stroke-width="0.8"/>
<path d="M81.1 65.1A2.0 2.0 0 0 1 78.0 67.3" stroke="#b8a0a0" stroke-width="0.8"/>
<path d="M19.0 62.2A1.4 1.4 0 0 1 20.7 61.1" stroke="#b8a0a0" stroke-width="0.8"/>
<path d="M78.3 25.6A2.0 2.0 0 0 1 74.6 24.6" stroke="#b8a0a0" stroke-width="0.8"/>
<path d="M93.5 50.4A1.4 1.4 0 0 1 95.4 48.5" stroke="#b8a0a0" stroke-width="0.8"/>
<path d="M103.2 60.7A1.5 1.5 0 0 1 104.6 58.8" stroke="#b8a0a0" stroke-width="0.8"/>
<path d="M97.7 41.2A1.7 1.7 0 0 1 98.5 43.8" stroke="#b8a0a0" stroke-width="0.8"/>
<path d="M87.7 25.4A2.0 2.0 0 0 1 90.3 28.0" stroke="#b8a0a0" stroke-width="0.8"/>
<path d="M38.3 8.2A1.5 1.5 0 0 1 37.9 5.6" stroke="#b8a0a0" stroke-width="0.8"/>
<path d="M31.6 21.5A2.0 2.0 0 0 1 33.6 18.2" stroke="#b8a0a0" stroke-width="0.8"/>
<path d="M24.4 12.0A1.7 1.7 0 0 1 27.1 10.1" stroke="#b8a0a0" stroke-width="0.8"/>
<path d="M72.3 22.8A1.7 1.7 0 0 1 70.1 21.6" stroke="#b8a0a0" stroke-width="0.8"/>
<path d="M29.6 27.0A1.3 1.3 0 0 1 28.7 24.5" stroke="#b8a0a0" stroke-width="0.8"/>
<path d="M96.8 12.8A1.7 1.7 0 0 1 96.4 15.1" stroke="#b8a0a0" stroke-width="0.8"/>
<path d="M53.1 7.9A1.3 1.3 0 0 1 50.9 7.2" stroke="#b8a0a0" stroke-width="0.8"/>
<path d="M33.6 59.3A1.4 1.4 0 0 1 31.1 59.0" stroke="#b8a0a0" stroke-width="0.8"/>
<path d="M86.2 21.7A1.4 1.4 0 0 1 87.0 24.4" stroke="#b8a0a0" stroke-width="0.8"/>
<path d="M41.5 29.0A1.0 1.0 0 0 1 39.6 28.3" stroke="#b8a0a0" stroke-width="0.8"/>
<path d="M45.8 76.3A1.2 1.2 0 0 1 47.2 74.2" stroke="#b8a0a0" stroke-width="0.8"/>
<path d="M90.8 33.3A1.2 1.2 0 0 1 88.4 33.6" stroke="#b8a0a0" stroke-width="0.8"/>
 </g>
 </g>
 <!-- shirt -->
 <path d="M0 88C6 80 16 76 28 74.5C38 78 48 80.5 60 81C74 81 84 78 94 74C106 77 114 86 119 98L121 114H0Z" fill="#0b0b0d" filter="url(#soft2)"/>
 <g filter="url(#soft2)">
 <path d="M50 68L71 68L72 78C67 80.5 56 81 49 78Z" fill="#b8806c"/>
 <path d="M41 42C41 26 49 18.5 60.5 18.5C72 18.5 80 26 80.5 42C81 54 79 64 74 70.5C70 75 65 76.5 60 76.5C55 76.5 50 75 46 70.5C42 64 41 54 41 42Z" fill="url(#skin)"/>
 <path d="M41 42C41 54 42 64 46 70.5C50 75 55 76.5 60 76.5C65 76.5 70 75 74 70.5C79 64 81 54 80.5 42C78 60 70 72 60 72C50 72 43 60 41 42Z" fill="#a86c5a" opacity="0.35"/>
 <path d="M38 44C37 28 46 16 60 16C75 16 83 26 84 42C81 29 73 20.5 61 20.5C49 20.5 41 29 38 44Z" fill="#2a1f1e"/>
 <path d="M44.5 36.5c3-1.3 7-1.3 10 0.3M65.5 36.8c3-1.6 7-1.6 10-0.3" stroke="#4a2e26" stroke-width="1.2" fill="none"/>
 <path d="M43.5 39C47 38 54 38 57 39.5C57 43.5 54 45 50 45C46 45 43.5 43 43.5 39ZM63.5 39.5C66.5 38 74 38 77.5 39C77.5 43 75 45 71 45C67 45 63.5 43.5 63.5 39.5Z" fill="#f6e6dc" opacity="0.45"/>
 <ellipse cx="50.5" cy="42" rx="3" ry="1.6" fill="#2a3630"/>
 <ellipse cx="71" cy="42" rx="3" ry="1.6" fill="#2a3630"/>
 <path d="M57 53.5C58.5 55.5 62.5 55.5 64 53.5" stroke="#b07462" stroke-width="1.2" fill="none"/>
 <ellipse cx="60.5" cy="47" rx="2" ry="6" fill="#f6d0b8" opacity="0.5"/>
 <path d="M50.5 59.5C56 58.5 64 58.5 69.5 59.5C68 65.5 63.5 68 60 68C56.5 68 52 65.5 50.5 59.5Z" fill="#a8202a"/>
 <path d="M53 60.6C57 60 63 60 67 60.6C65 62.8 55 62.8 53 60.6Z" fill="#f0e6e0"/>
 </g>
 <!-- fw box -->
 <rect x="109.8" y="42.5" width="29.4" height="28.3" fill="#141414"/>
 <text x="124.3" y="61.8" font-family="Liberation Sans" font-size="14" font-style="italic" font-weight="bold" fill="#fff" text-anchor="middle" letter-spacing="-0.4">fw</text>
 <path d="M149.3 54.3L155 60.3M155 54.3L149.3 60.3" stroke="#f0f0f0" stroke-width="1.4"/>
 <!-- yt -->
 <rect x="164.3" y="46.2" width="31.6" height="21.8" rx="5" fill="#f40a0a"/>
 <path d="M177.3 52.3L185.5 57.1L177.3 61.9Z" fill="#fff"/>
 <!-- caption -->
 <rect x="25.5" y="98.2" width="156.2" height="14.3" fill="#0a0a0a"/>
 <text x="103.8" y="110.1" font-family="Liberation Sans" font-size="11.9" font-weight="bold" fill="#fff" text-anchor="middle">FOURTHWALL X YOUTUBE</text>
 <path d="M44 114.5c1.5-2 3-2 4.5 0M52 114.5c2-2.5 4-2.5 6 0M62 114.5c2-2 4-2 6 0M72 114.5c2-2.5 5-2.5 7 0M84 114.5c2-2 4-2 6 0" stroke="#e0e0e0" stroke-width="1" fill="none"/>
</g></symbol></svg>
<svg class="a" style="left:541px;top:172px" width="202" height="114"><use href="#scene" width="202" height="114"/></svg>
<!-- thumbs -->
<div class="a" style="left:177px;top:418px;width:85px;height:40px;border:1px dashed #f2f2f2;border-radius:2px"></div>
<svg class="a" style="left:212px;top:428px" width="17" height="17" viewBox="212 428 17 17">
  <rect x="214" y="432.3" width="11" height="10.6" rx="1.2" fill="#606060"/>
  <circle cx="225.2" cy="432.2" r="3.4" fill="#fff"/>
  <path d="M215.8 441.3l2.6-3.2 1.8 2.1 1.9-2.5 2.5 3.6z" fill="#fff"/>
  <path d="M225.2 429.8v4.8M222.8 432.2h4.8" stroke="#606060" stroke-width="1.2"/>
</svg>
<svg class="a" style="left:243.5px;top:426px" width="12" height="12" viewBox="0 0 12 12">
  <circle cx="6" cy="6" r="5" fill="none" stroke="#555" stroke-width="1"/>
  <path d="M4.3 4.6a1.7 1.7 0 1 1 2.4 1.5c-.5.3-.7.6-.7 1.2" fill="none" stroke="#555" stroke-width="1"/>
  <circle cx="6" cy="8.6" r=".6" fill="#555"/>
</svg>
<div class="a gray" style="left:188.6px;top:448.3px;font-size:8px">Upload thumbnail</div>
<div class="a" style="left:264.2px;top:418px;width:86.5px;height:49px;overflow:hidden"><svg width="86.5" height="49" style="display:block;--curl:0.8"><use href="#scene" width="86.5" height="49"/></svg></div>
<div class="a" style="left:353px;top:418px;width:87px;height:49px;overflow:hidden"><svg width="87" height="49" style="display:block;--curl:0.8"><use href="#scene" width="87" height="49"/></svg><div style="position:absolute;inset:0;background:rgba(0,0,0,.22)"></div></div>
<div class="a" style="left:442px;top:418px;width:87px;height:49px;overflow:hidden"><svg width="87" height="49" style="display:block;--curl:0.8"><use href="#scene" width="87" height="49"/></svg><div style="position:absolute;inset:0;background:rgba(255,255,255,.18)"></div></div>
<!-- footer bg covers clipped content -->
<div class="a" style="left:150px;top:452.5px;width:624px;height:31.5px;background:#fff;border-radius:0 0 3px 3px"></div>
<!-- footer -->
<div class="hl" style="left:150px;top:452px;width:624px;background:#ececec"></div>
<div class="a" style="left:723px;top:458px;width:44px;height:24px;background:#2a5bd2;border-radius:2px"></div>
<div class="a" style="left:733.6px;top:466px;font-size:8.5px;font-weight:bold;color:#fff">NEXT</div>
<div class="a gray" style="left:223.6px;top:465.7px;font-size:8.5px">Checks complete. No issues found.</div>
<svg class="a" style="left:157px;top:463px" width="58" height="15" viewBox="157 463 58 15">
  <path d="M163.5 464.6l-4.5 4.5h2.8v3.8h3.4v-3.8h2.8z" fill="#2c5ac6"/>
  <rect x="158.9" y="474.5" width="9.4" height="0.9" fill="#2c5ac6"/>
  <rect x="178" y="464" width="12.2" height="12" rx="1.3" fill="#2c5ac6"/>
  <text x="184.3" y="471.9" font-family="Liberation Sans" font-size="5.6" font-weight="bold" fill="#fff" text-anchor="middle" letter-spacing="0.5">SD</text>
  <circle cx="205.3" cy="469.8" r="6.3" fill="#2c5ac6"/>
  <path d="M202.4 470l2 2 3.8-3.9" fill="none" stroke="#fff" stroke-width="1.3"/>
</svg>

</div>
</body></html>
